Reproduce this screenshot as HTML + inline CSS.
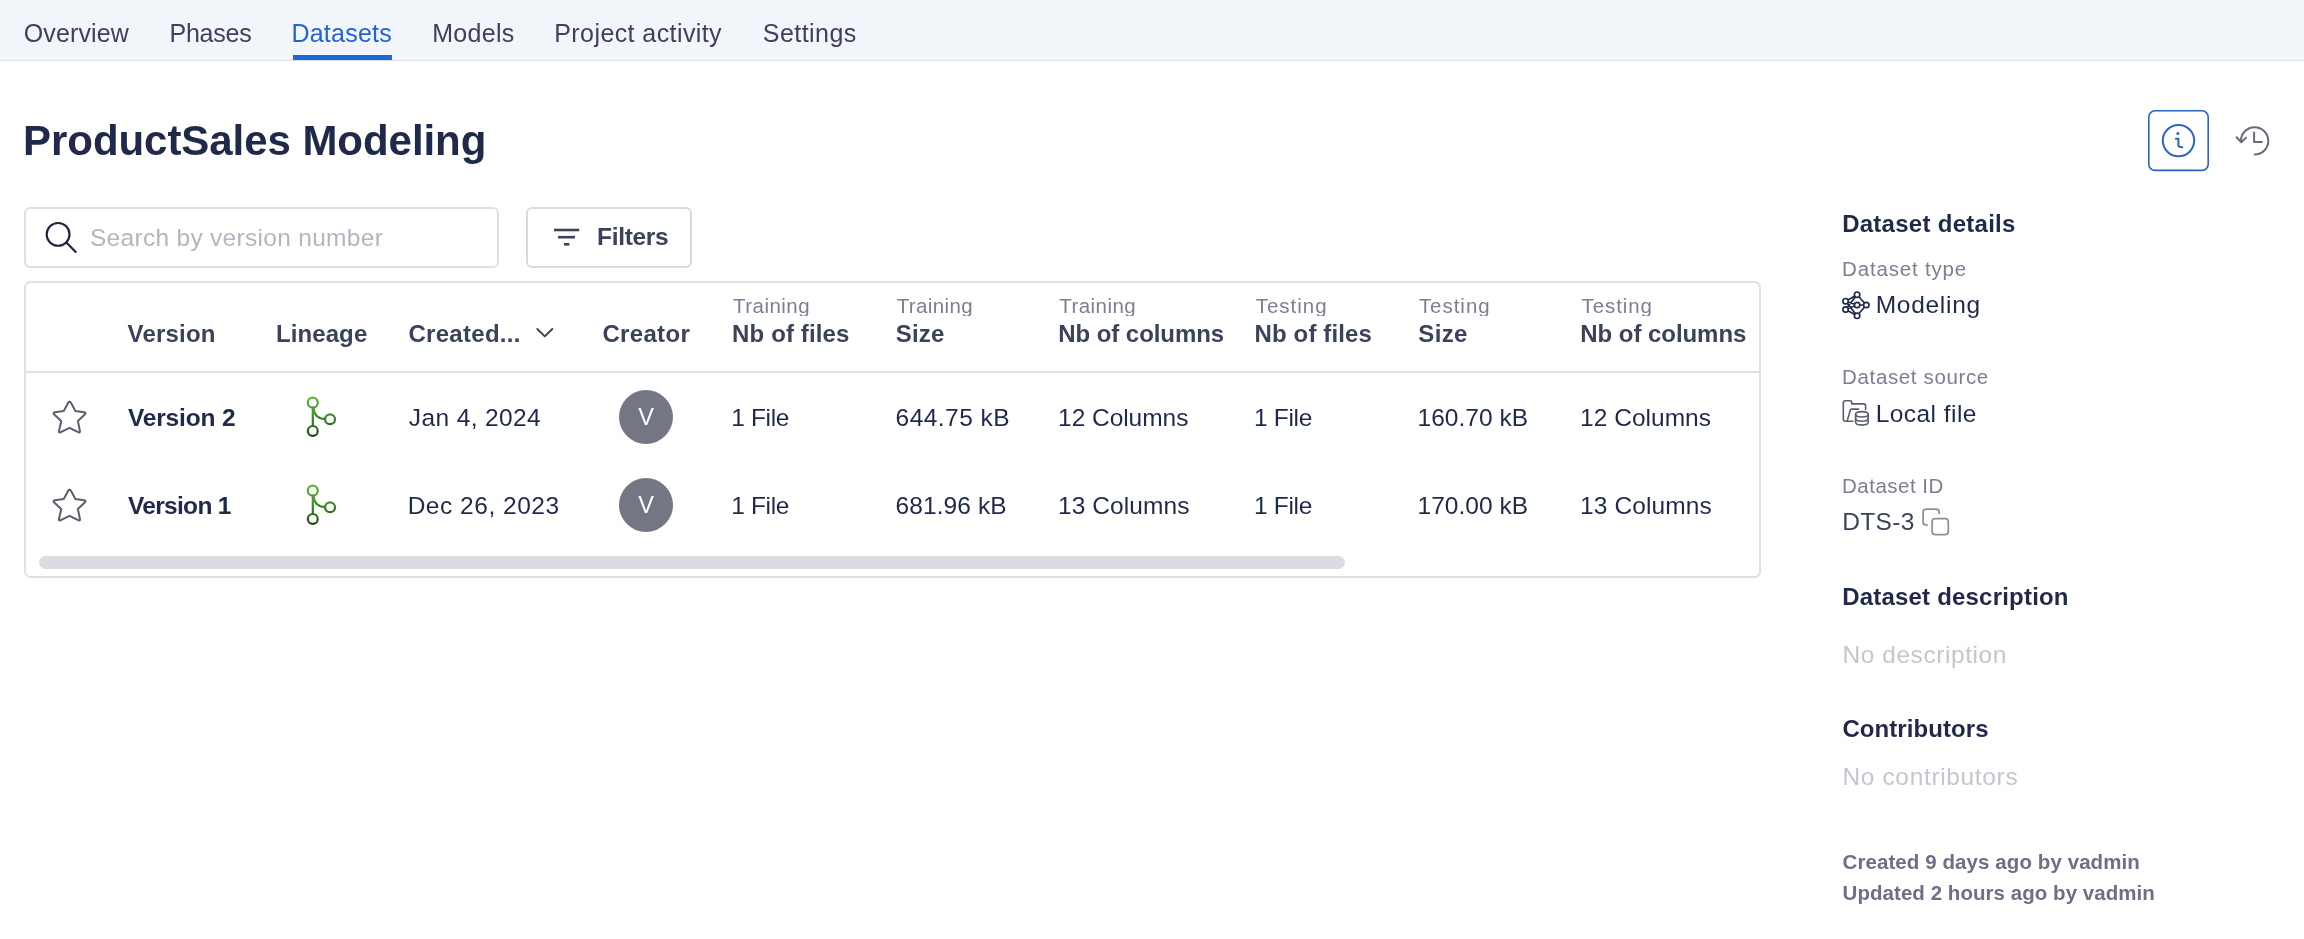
<!DOCTYPE html>
<html lang="en">
<head>
<meta charset="utf-8">
<title>ProductSales Modeling - Datasets</title>
<style>
html,body{margin:0;padding:0;}
body{width:2304px;height:939px;position:relative;overflow:hidden;background:#ffffff;font-family:"Liberation Sans",Arial,sans-serif;}
.abs{position:absolute;box-sizing:border-box;}
.t{position:absolute;white-space:pre;line-height:1;font-family:"Liberation Sans",Arial,sans-serif;}
#nav{left:0;top:0;width:2304px;height:61px;background:#f2f5f9;border-bottom:1px solid #dfe1e4;}
#tabline{left:293px;top:55px;width:99px;height:5px;background:#1c69dc;}
#search{left:24px;top:207px;width:474.5px;height:61px;border:2px solid #dedfe2;border-radius:6px;background:#fff;}
#filters{left:526px;top:207px;width:166px;height:61px;border:2px solid #d9dadd;border-radius:6px;background:#fff;}
#table{left:24px;top:281px;width:1737px;height:297px;border:2px solid #dfe0e3;border-radius:6.5px;background:#fff;}
#thline{left:26px;top:371px;width:1733px;height:2px;background:#dfe0e3;}
#scroll{left:39px;top:556px;width:1306px;height:13px;border-radius:7px;background:#dadce1;}
.avatar{width:54px;height:54px;border-radius:50%;background:#757684;}
svg{position:absolute;left:0;top:0;overflow:visible;}
</style>
</head>
<body>
<div id="nav" class="abs"></div>
<div id="tabline" class="abs"></div>
<div id="search" class="abs"></div>
<div id="filters" class="abs"></div>
<div id="table" class="abs"></div>
<div id="thline" class="abs"></div>
<div id="scroll" class="abs"></div>
<div class="abs avatar" style="left:619.3px;top:389.8px"></div>
<div class="abs avatar" style="left:619.3px;top:477.8px"></div>

<svg width="2304" height="939" viewBox="0 0 2304 939" fill="none" stroke-linecap="round" stroke-linejoin="round">
  <defs>
    <linearGradient id="lg" gradientUnits="userSpaceOnUse" x1="0" y1="397" x2="0" y2="437">
      <stop offset="0" stop-color="#5fb53e"/>
      <stop offset="0.5" stop-color="#3d8a29"/>
      <stop offset="1" stop-color="#1c450c"/>
    </linearGradient>
  </defs>

  <!-- search icon -->
  <g stroke="#1b2340" stroke-width="2.1">
    <circle cx="58.1" cy="234.4" r="11.4"/>
    <path d="M66.6 242.8 L75.7 251.9"/>
  </g>
  <!-- filter icon -->
  <g stroke="#3b435a" stroke-width="2.6" stroke-linecap="butt">
    <path d="M554 230 H579.2"/>
    <path d="M558 237.2 H575"/>
    <path d="M563.9 244.3 H569.4"/>
  </g>
  <!-- sort chevron -->
  <path d="M537.3 329 L544.8 336.4 L552.3 329" stroke="#3b435a" stroke-width="1.9"/>

  <!-- stars -->
  <path d="M68.32 402.59 Q69.55 400.30 70.80 402.58 L75.40 411.00 L84.03 412.31 Q86.60 412.70 84.72 414.49 L77.90 421.00 L79.88 430.75 Q80.40 433.30 78.08 432.12 L69.55 427.80 L60.83 432.14 Q58.50 433.30 59.06 430.76 L61.20 421.00 L54.29 414.48 Q52.40 412.70 54.97 412.32 L63.80 411.00 Z" stroke="#5a5f6e" stroke-width="2"/>
  <g transform="translate(0 88)"><path d="M68.32 402.59 Q69.55 400.30 70.80 402.58 L75.40 411.00 L84.03 412.31 Q86.60 412.70 84.72 414.49 L77.90 421.00 L79.88 430.75 Q80.40 433.30 78.08 432.12 L69.55 427.80 L60.83 432.14 Q58.50 433.30 59.06 430.76 L61.20 421.00 L54.29 414.48 Q52.40 412.70 54.97 412.32 L63.80 411.00 Z" stroke="#5a5f6e" stroke-width="2"/></g>
  <!-- lineage -->
  <g stroke="url(#lg)" stroke-width="2.2">
    <circle cx="312.8" cy="402.65" r="4.95"/>
      <circle cx="330.05" cy="419.25" r="4.95"/>
      <circle cx="312.8" cy="430.95" r="4.95"/>
      <path d="M312.8 407.6 V426"/>
      <path d="M313.6 408.2 C314 415.5 318.5 418.6 325.1 419.2"/>
  </g>
  <g stroke="url(#lg)" stroke-width="2.2" transform="translate(0 88)">
    <circle cx="312.8" cy="402.65" r="4.95"/>
      <circle cx="330.05" cy="419.25" r="4.95"/>
      <circle cx="312.8" cy="430.95" r="4.95"/>
      <path d="M312.8 407.6 V426"/>
      <path d="M313.6 408.2 C314 415.5 318.5 418.6 325.1 419.2"/>
  </g>

  <!-- info button + icon -->
  <rect x="2148.8" y="110.8" width="59.4" height="59.6" rx="6.2" stroke="#2b62c4" stroke-width="1.6" fill="#ffffff"/>
  <g stroke="#2b63c6" stroke-width="2">
    <circle cx="2178.5" cy="140.6" r="15.7"/>
    <path d="M2175.9 138.7 H2178.4 V145 C2178.4 146.6 2179.6 147.3 2182.3 147.3"/>
  </g>
  <circle cx="2177.9" cy="133.6" r="1.5" fill="#2b63c6"/>
  <!-- history icon -->
  <g stroke="#676b78" stroke-width="2">
    <path d="M2240.9 141 A13.7 13.7 0 1 1 2254.6 154.6"/>
    <path d="M2236.6 137.3 L2241.3 142.2 L2246 137.6"/>
    <path d="M2254.1 132.6 V142.1 H2261.8"/>
  </g>

  <!-- modeling icon -->
  <g stroke="#1f2a4a" stroke-width="1.7">
    <path d="M1845.6 301.2 L1857.1 294.7 M1845.6 301.2 L1857.1 305 M1845.6 301.2 L1857.1 315.8 M1845.6 309.5 L1857.1 294.7 M1845.6 309.5 L1857.1 305 M1845.6 309.5 L1857.1 315.8 M1857.1 294.7 L1866.3 305 M1857.1 305 L1866.3 305 M1857.1 315.8 L1866.3 305"/>
    <g fill="#ffffff">
      <circle cx="1857.1" cy="294.7" r="2.7"/>
      <circle cx="1845.6" cy="301.2" r="2.7"/>
      <circle cx="1845.6" cy="309.5" r="2.7"/>
      <circle cx="1857.1" cy="305" r="2.7"/>
      <circle cx="1866.3" cy="305" r="2.7"/>
      <circle cx="1857.1" cy="315.8" r="2.7"/>
    </g>
  </g>

  <!-- local file icon -->
  <g stroke="#5a5f6e" stroke-width="1.6">
    <path d="M1853 421.2 H1845.4 Q1843.3 421.2 1843.3 419.1 V402.9 Q1843.3 400.8 1845.4 400.8 H1850.2 Q1851.7 400.8 1851.7 402.3 V403.9 H1863.6 Q1865.6 403.9 1865.6 405.9 V409.6"/>
    <path d="M1847.2 420.9 L1850.3 410.2 Q1850.6 409.1 1851.8 409.1 H1858.6"/>
    <ellipse cx="1861.9" cy="414.3" rx="6.3" ry="2.7" fill="#fff"/>
    <path d="M1855.6 414.3 V422.3 C1855.6 426 1868.2 426 1868.2 422.3 V414.3"/>
    <path d="M1855.6 418.4 C1855.6 422.1 1868.2 422.1 1868.2 418.4"/>
  </g>

  <!-- copy icon -->
  <g stroke="#8a8e9b" stroke-width="1.7">
    <path d="M1927.3 525 H1926.1 Q1923.1 525 1923.1 522 V512.2 Q1923.1 509.2 1926.1 509.2 H1936.2 Q1939.2 509.2 1939.2 512.2 V513.4"/>
    <rect x="1932.1" y="518.6" width="16.2" height="16" rx="3"/>
  </g>
</svg>

<div id="txt" style="position:absolute;left:0;top:0;width:2304px;height:939px;will-change:transform">
<span class="t" style="left:23.80px;top:21.14px;font-size:25px;letter-spacing:0.105px;color:#3b435a;">Overview</span>
<span class="t" style="left:169.46px;top:21.14px;font-size:25px;letter-spacing:-0.227px;color:#3b435a;">Phases</span>
<span class="t" style="left:291.46px;top:21.14px;font-size:25px;letter-spacing:0.226px;color:#2264d1;">Datasets</span>
<span class="t" style="left:432.28px;top:21.14px;font-size:25px;letter-spacing:0.284px;color:#3b435a;">Models</span>
<span class="t" style="left:554.28px;top:21.14px;font-size:25px;letter-spacing:0.413px;color:#3b435a;">Project activity</span>
<span class="t" style="left:762.79px;top:21.14px;font-size:25px;letter-spacing:0.452px;color:#3b435a;">Settings</span>
<span class="t" style="left:23.07px;top:119.75px;font-size:42px;letter-spacing:-0.055px;color:#1f2a4a;font-weight:700;">ProductSales Modeling</span>
<span class="t" style="left:89.93px;top:225.56px;font-size:24.5px;letter-spacing:0.301px;color:#b3b6c2;">Search by version number</span>
<span class="t" style="left:597.04px;top:224.56px;font-size:24.5px;letter-spacing:-0.314px;color:#3b435a;font-weight:700;">Filters</span>
<span class="t" style="left:127.53px;top:321.98px;font-size:24px;letter-spacing:0.208px;color:#3b435a;font-weight:700;">Version</span>
<span class="t" style="left:275.95px;top:321.98px;font-size:24px;letter-spacing:0.100px;color:#3b435a;font-weight:700;">Lineage</span>
<span class="t" style="left:408.42px;top:321.98px;font-size:24px;letter-spacing:0.296px;color:#3b435a;font-weight:700;">Created...</span>
<span class="t" style="left:602.45px;top:321.98px;font-size:24px;letter-spacing:0.322px;color:#3b435a;font-weight:700;">Creator</span>
<span class="t" style="left:733.06px;top:295.95px;font-size:20.5px;letter-spacing:0.467px;color:#7a7f91;height:19.65px;overflow:hidden;">Training</span>
<span class="t" style="left:732.10px;top:321.98px;font-size:24px;letter-spacing:0.127px;color:#3b435a;font-weight:700;">Nb of files</span>
<span class="t" style="left:896.65px;top:295.95px;font-size:20.5px;letter-spacing:0.383px;color:#7a7f91;height:19.65px;overflow:hidden;">Training</span>
<span class="t" style="left:895.66px;top:321.98px;font-size:24px;letter-spacing:0.250px;color:#3b435a;font-weight:700;">Size</span>
<span class="t" style="left:1059.25px;top:295.95px;font-size:20.5px;letter-spacing:0.440px;color:#7a7f91;height:19.65px;overflow:hidden;">Training</span>
<span class="t" style="left:1058.31px;top:321.98px;font-size:24px;letter-spacing:-0.068px;color:#3b435a;font-weight:700;">Nb of columns</span>
<span class="t" style="left:1255.66px;top:295.95px;font-size:20.5px;letter-spacing:1.002px;color:#7a7f91;height:19.65px;overflow:hidden;">Testing</span>
<span class="t" style="left:1254.55px;top:321.98px;font-size:24px;letter-spacing:0.131px;color:#3b435a;font-weight:700;">Nb of files</span>
<span class="t" style="left:1418.88px;top:295.95px;font-size:20.5px;letter-spacing:0.974px;color:#7a7f91;height:19.65px;overflow:hidden;">Testing</span>
<span class="t" style="left:1418.33px;top:321.98px;font-size:24px;letter-spacing:0.354px;color:#3b435a;font-weight:700;">Size</span>
<span class="t" style="left:1581.47px;top:295.95px;font-size:20.5px;letter-spacing:0.920px;color:#7a7f91;height:19.65px;overflow:hidden;">Testing</span>
<span class="t" style="left:1580.30px;top:321.98px;font-size:24px;letter-spacing:-0.049px;color:#3b435a;font-weight:700;">Nb of columns</span>
<span class="t" style="left:127.95px;top:405.56px;font-size:24.5px;letter-spacing:-0.172px;color:#1f2a4a;font-weight:700;">Version 2</span>
<span class="t" style="left:408.80px;top:405.56px;font-size:24.5px;letter-spacing:0.387px;color:#1f2a4a;">Jan 4, 2024</span>
<span class="t" style="left:638.24px;top:406.41px;font-size:23.5px;letter-spacing:-0.587px;color:#ffffff;">V</span>
<span class="t" style="left:731.30px;top:405.56px;font-size:24.5px;letter-spacing:-0.358px;color:#1f2a4a;">1 File</span>
<span class="t" style="left:895.55px;top:405.56px;font-size:24.5px;letter-spacing:0.467px;color:#1f2a4a;">644.75 kB</span>
<span class="t" style="left:1058.06px;top:405.56px;font-size:24.5px;letter-spacing:-0.042px;color:#1f2a4a;">12 Columns</span>
<span class="t" style="left:1253.90px;top:405.56px;font-size:24.5px;letter-spacing:-0.303px;color:#1f2a4a;">1 File</span>
<span class="t" style="left:1417.54px;top:405.56px;font-size:24.5px;letter-spacing:0.015px;color:#1f2a4a;">160.70 kB</span>
<span class="t" style="left:1580.01px;top:405.56px;font-size:24.5px;letter-spacing:0.031px;color:#1f2a4a;">12 Columns</span>
<span class="t" style="left:127.95px;top:493.56px;font-size:24.5px;letter-spacing:-0.681px;color:#1f2a4a;font-weight:700;">Version 1</span>
<span class="t" style="left:407.67px;top:493.56px;font-size:24.5px;letter-spacing:0.516px;color:#1f2a4a;">Dec 26, 2023</span>
<span class="t" style="left:638.24px;top:494.41px;font-size:23.5px;letter-spacing:-0.587px;color:#ffffff;">V</span>
<span class="t" style="left:731.30px;top:493.56px;font-size:24.5px;letter-spacing:-0.358px;color:#1f2a4a;">1 File</span>
<span class="t" style="left:895.55px;top:493.56px;font-size:24.5px;letter-spacing:0.097px;color:#1f2a4a;">681.96 kB</span>
<span class="t" style="left:1058.06px;top:493.56px;font-size:24.5px;letter-spacing:0.070px;color:#1f2a4a;">13 Columns</span>
<span class="t" style="left:1253.90px;top:493.56px;font-size:24.5px;letter-spacing:-0.303px;color:#1f2a4a;">1 File</span>
<span class="t" style="left:1417.54px;top:493.56px;font-size:24.5px;letter-spacing:0.015px;color:#1f2a4a;">170.00 kB</span>
<span class="t" style="left:1580.01px;top:493.56px;font-size:24.5px;letter-spacing:0.124px;color:#1f2a4a;">13 Columns</span>
<span class="t" style="left:1842.13px;top:211.98px;font-size:24px;letter-spacing:0.275px;color:#1f2a4a;font-weight:700;">Dataset details</span>
<span class="t" style="left:1842.10px;top:258.95px;font-size:20.5px;letter-spacing:0.821px;color:#7a7f91;">Dataset type</span>
<span class="t" style="left:1875.67px;top:292.56px;font-size:24.5px;letter-spacing:0.724px;color:#1f2a4a;">Modeling</span>
<span class="t" style="left:1842.10px;top:366.95px;font-size:20.5px;letter-spacing:0.633px;color:#7a7f91;">Dataset source</span>
<span class="t" style="left:1875.67px;top:401.56px;font-size:24.5px;letter-spacing:0.452px;color:#1f2a4a;">Local file</span>
<span class="t" style="left:1842.10px;top:475.95px;font-size:20.5px;letter-spacing:0.475px;color:#7a7f91;">Dataset ID</span>
<span class="t" style="left:1842.18px;top:509.56px;font-size:24.5px;letter-spacing:0.376px;color:#3b435a;">DTS-3</span>
<span class="t" style="left:1842.13px;top:584.98px;font-size:24px;letter-spacing:0.204px;color:#1f2a4a;font-weight:700;">Dataset description</span>
<span class="t" style="left:1842.38px;top:642.56px;font-size:24.5px;letter-spacing:0.572px;color:#c3c6cf;">No description</span>
<span class="t" style="left:1842.42px;top:716.98px;font-size:24px;letter-spacing:0.069px;color:#1f2a4a;font-weight:700;">Contributors</span>
<span class="t" style="left:1842.38px;top:764.56px;font-size:24.5px;letter-spacing:0.653px;color:#c3c6cf;">No contributors</span>
<span class="t" style="left:1842.52px;top:851.95px;font-size:20.5px;letter-spacing:0.083px;color:#6b7085;font-weight:700;">Created 9 days ago by vadmin</span>
<span class="t" style="left:1842.59px;top:882.95px;font-size:20.5px;letter-spacing:0.046px;color:#6b7085;font-weight:700;">Updated 2 hours ago by vadmin</span>
</div>
</body>
</html>
